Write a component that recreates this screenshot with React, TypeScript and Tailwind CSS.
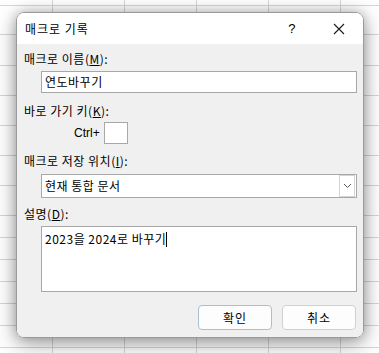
import React from "react";

const vLines = [52, 124, 196, 268, 340];
const hLines = [5, 34, 65, 95, 125, 155, 185, 215, 237, 259, 281, 303, 325, 347];

const kr = { fontFamily: '"Noto Sans CJK KR", "Noto Sans", sans-serif' };

export default function App() {
  return (
    <div className="relative w-[379px] h-[353px] overflow-hidden bg-white" style={kr}>
      {vLines.map((x) => (
        <div key={"v" + x} className="absolute top-0 bottom-0 w-px bg-[#d6d6d6]" style={{ left: x }} />
      ))}
      {hLines.map((y) => (
        <div key={"h" + y} className="absolute left-0 right-0 h-px bg-[#d6d6d6]" style={{ top: y }} />
      ))}

      <div className="absolute left-[16px] top-[12px] w-[348px] h-[326px] rounded-[8px] border border-[#9a9a9a] overflow-hidden flex flex-col shadow-[0_6px_22px_rgba(0,0,0,0.34),0_0_12px_rgba(0,0,0,0.22)] text-[12px] text-black tracking-[0.5px]">
        <div className="h-[31px] bg-white flex items-center shrink-0">
          <span className="ml-[8px] leading-[16px] tracking-[1px]">매크로 기록</span>
          <span className="ml-auto mr-[37px] text-[13px] leading-[16px]" style={{ fontFamily: '"Liberation Sans", sans-serif' }}>?</span>
          <svg width="12" height="12" viewBox="0 0 12 12" className="mr-[18px]">
            <path d="M1 1 L11 11 M11 1 L1 11" stroke="#1a1a1a" strokeWidth="1.1" />
          </svg>
        </div>
        <div className="flex-1 bg-[#f0f0f0] flex flex-col px-[6px] pl-[7px]">
          <div className="mt-[7px] h-[16px] leading-[16px]">매크로 이름(<span className="underline">M</span>):</div>
          <div className="mt-[4px] ml-[17px] h-[22px] bg-white border border-[#a8a8a8] flex items-center pl-[3px] leading-[16px]">연도바꾸기</div>

          <div className="mt-[10px] h-[16px] leading-[16px]">바로 가기 키(<span className="underline">K</span>):</div>
          <div className="mt-[3px] flex items-center">
            <span className="ml-[50px] w-[30px] leading-[16px] tracking-normal" style={{ fontFamily: '"Liberation Sans", sans-serif' }}>Ctrl+</span>
            <div className="w-[24px] h-[22px] bg-white border border-[#a8a8a8]" />
          </div>

          <div className="mt-[9px] h-[16px] leading-[16px]">매크로 저장 위치(<span className="underline">I</span>):</div>
          <div className="mt-[5px] ml-[17px] h-[24px] bg-white border border-[#a8a8a8] flex items-center">
            <span className="pl-[3px] leading-[16px]">현재 통합 문서</span>
            <div className="ml-auto h-[22px] w-[16px] mr-[1px] border border-[#d4d4d4] bg-white flex items-center justify-center">
              <svg width="9" height="6" viewBox="0 0 9 6">
                <path d="M1 1 L4.5 4.5 L8 1" stroke="#555" strokeWidth="1" fill="none" />
              </svg>
            </div>
          </div>

          <div className="mt-[8px] h-[16px] leading-[16px]">설명(<span className="underline">D</span>):</div>
          <div className="mt-[4px] ml-[17px] h-[66px] bg-white border border-[#a8a8a8] pl-[3px] pt-[3px]">
            <span className="leading-[16px]">2023을 2024로 바꾸기</span>
            <span className="inline-block w-px h-[15px] bg-black align-[-3px]" />
          </div>

          <div className="mt-[13px] flex justify-end gap-[10px] mr-[1px]">
            <button className="w-[74px] h-[25px] rounded-[4px] bg-[#fdfdfd] border border-[#a9bfd6] leading-[16px] tracking-[1px]">확인</button>
            <button className="w-[74px] h-[25px] rounded-[4px] bg-[#fdfdfd] border border-[#d0d0d0] leading-[16px] tracking-[1px]">취소</button>
          </div>
        </div>
      </div>
    </div>
  );
}
